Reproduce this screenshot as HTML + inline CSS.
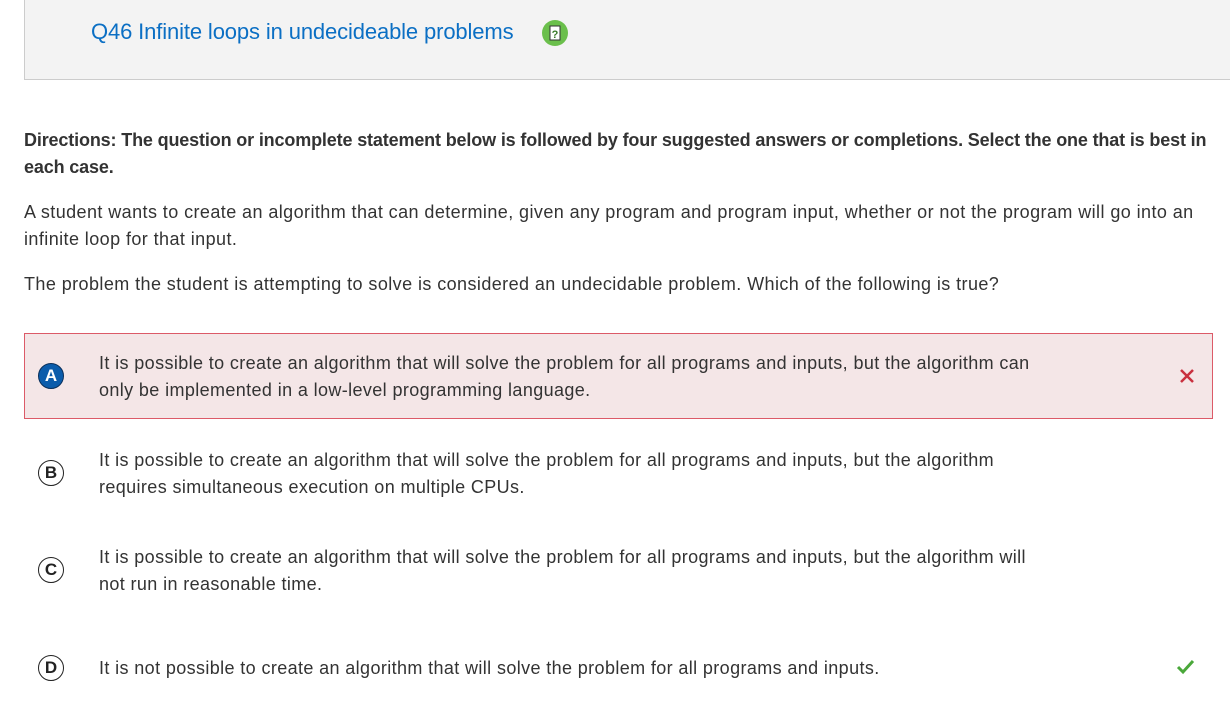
<!DOCTYPE html>
<html><head><style>
body{margin:0;width:1230px;height:697px;overflow:hidden;background:#fff;font-family:"Liberation Sans",Arial,sans-serif;color:#333;position:relative}
.hdr{position:absolute;left:24px;top:0;width:1206px;height:79px;background:#f3f3f3;border-left:1px solid #ccc;border-bottom:1px solid #ccc}
.title{position:absolute;left:66px;top:19px;font-size:22px;color:#0b6fc4;letter-spacing:-0.13px}
.qi{position:absolute;left:517px;top:20px;width:26px;height:26px;border-radius:50%;background:#6abf4b}
.t{position:absolute;left:24px;font-size:18px;line-height:27px;width:1195px;letter-spacing:0.42px}
.opt{position:absolute;left:24px;width:1189px;height:86px;box-sizing:border-box}
.ot{position:absolute;left:75px;font-size:18px;line-height:27px;color:#333;letter-spacing:0.38px}
.c{position:absolute;left:14px;width:26px;height:26px;border-radius:50%;box-sizing:border-box;border:1.5px solid #222;font-weight:bold;font-size:17px;text-align:center;line-height:23px;color:#222}
</style></head><body>
<div class="hdr"><div class="title">Q46 Infinite loops in undecideable problems</div>
<div class="qi"><svg width="26" height="26"><rect x="8" y="6" width="10" height="14" fill="#fff" stroke="#333" stroke-width="1"/><text x="13" y="18" font-size="11" font-weight="bold" text-anchor="middle" fill="#3a7a2a" font-family="Liberation Sans">?</text></svg></div></div>
<div class="t" style="top:127px;font-weight:bold;letter-spacing:-0.15px">Directions: The question or incomplete statement below is followed by four suggested answers or completions. Select the one that is best in each case.</div>
<div class="t" style="top:199px">A student wants to create an algorithm that can determine, given any program and program input, whether or not the program will go into an infinite loop for that input.</div>
<div class="t" style="top:271px">The problem the student is attempting to solve is considered an undecidable problem. Which of the following is true?</div>
<div class="opt" style="top:333px;background:#f4e6e7;border:1px solid #dc5a68">
<div class="c" style="top:29px;left:13px;background:#0b5cab;color:#fff;border-color:#0a2f5a">A</div>
<div class="ot" style="top:16px;left:74px">It is possible to create an algorithm that will solve the problem for all programs and inputs, but the algorithm can<br>only be implemented in a low-level programming language.</div>
<svg style="position:absolute;left:1154px;top:34px" width="16" height="16"><path d="M2 2L14 14M14 2L2 14" stroke="#c9303f" stroke-width="2.5"/></svg>
</div>
<div class="opt" style="top:431px"><div class="c" style="top:29px">B</div><div class="ot" style="top:16px">It is possible to create an algorithm that will solve the problem for all programs and inputs, but the algorithm<br>requires simultaneous execution on multiple CPUs.</div></div>
<div class="opt" style="top:528px"><div class="c" style="top:29px">C</div><div class="ot" style="top:16px">It is possible to create an algorithm that will solve the problem for all programs and inputs, but the algorithm will<br>not run in reasonable time.</div></div>
<div class="opt" style="top:640px"><div class="c" style="top:15px">D</div><div class="ot" style="top:15px">It is not possible to create an algorithm that will solve the problem for all programs and inputs.</div>
<svg style="position:absolute;left:1152px;top:19px" width="20" height="16"><path d="M2 8L7 13L17 2" stroke="#4aa83a" stroke-width="3" fill="none"/></svg></div>
</body></html>
